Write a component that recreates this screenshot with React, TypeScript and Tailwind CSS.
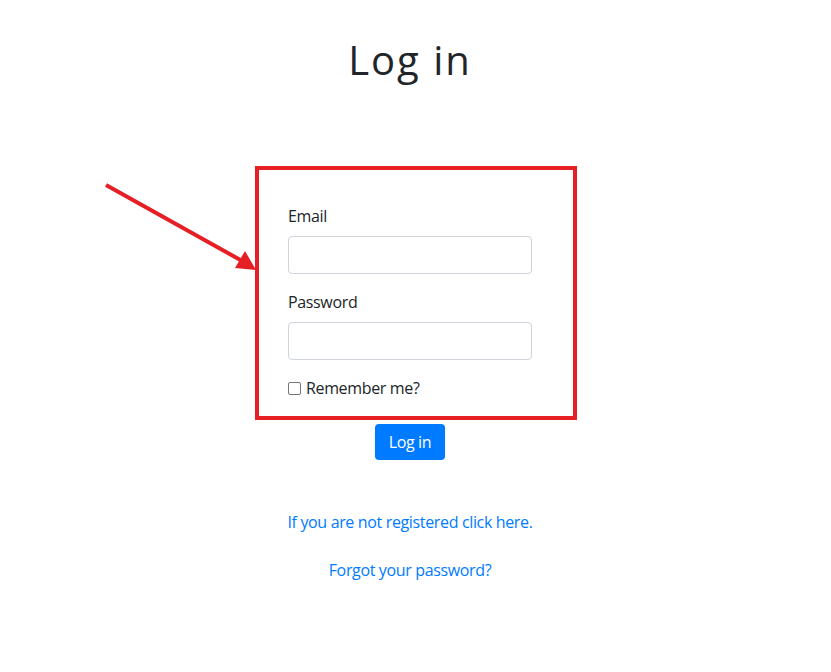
import React from "react";

export default function App() {
  return (
    <div className="relative w-[831px] h-[672px] bg-white text-[#212529] font-['Open_Sans','Segoe_UI',sans-serif] tracking-[-0.35px]">
      <div className="w-[820px] flex flex-col items-center">
        <h1 className="mt-[36px] h-[48px] text-[40px] leading-[48px] font-normal tracking-[2px] text-[#212529] font-['Open_Sans',sans-serif]">
          Log in
        </h1>
        <div className="mt-[82px] ml-[12px] w-[322px] border-[4px] border-[#e61f25] pt-[34px] pl-[29px] pr-[41px] pb-[16px]">
          <label className="block text-[16px] leading-[24px] mb-[8px]">Email</label>
          <div className="h-[38px] w-[244px] border border-[#ced4da] rounded-[4px] mb-[16px]" />
          <label className="block text-[16px] leading-[24px] mb-[8px]">Password</label>
          <div className="h-[38px] w-[244px] border border-[#ced4da] rounded-[4px] mb-[16px]" />
          <div className="flex items-center h-[24px]">
            <span className="w-[13px] h-[13px] border border-[#767676] rounded-[2px] mr-[5px] bg-white" />
            <span className="text-[16px] leading-[24px]">Remember me?</span>
          </div>
        </div>
        <button className="mt-[4px] h-[36px] w-[70px] rounded-[4px] bg-[#007bff] text-white text-[16px] leading-[24px]">
          Log in
        </button>
        <a className="mt-[50px] text-[16px] leading-[24px] text-[#007bff]">
          If you are not registered click here.
        </a>
        <a className="mt-[24px] text-[16px] leading-[24px] text-[#007bff]">
          Forgot your password?
        </a>
      </div>
      <svg className="absolute left-0 top-0 pointer-events-none" width="831" height="672">
        <line x1="106" y1="185" x2="244" y2="262" stroke="#e61f25" strokeWidth="4" strokeLinecap="butt" />
        <polygon points="235,268 245,251 256,270" fill="#e61f25" />
      </svg>
    </div>
  );
}
